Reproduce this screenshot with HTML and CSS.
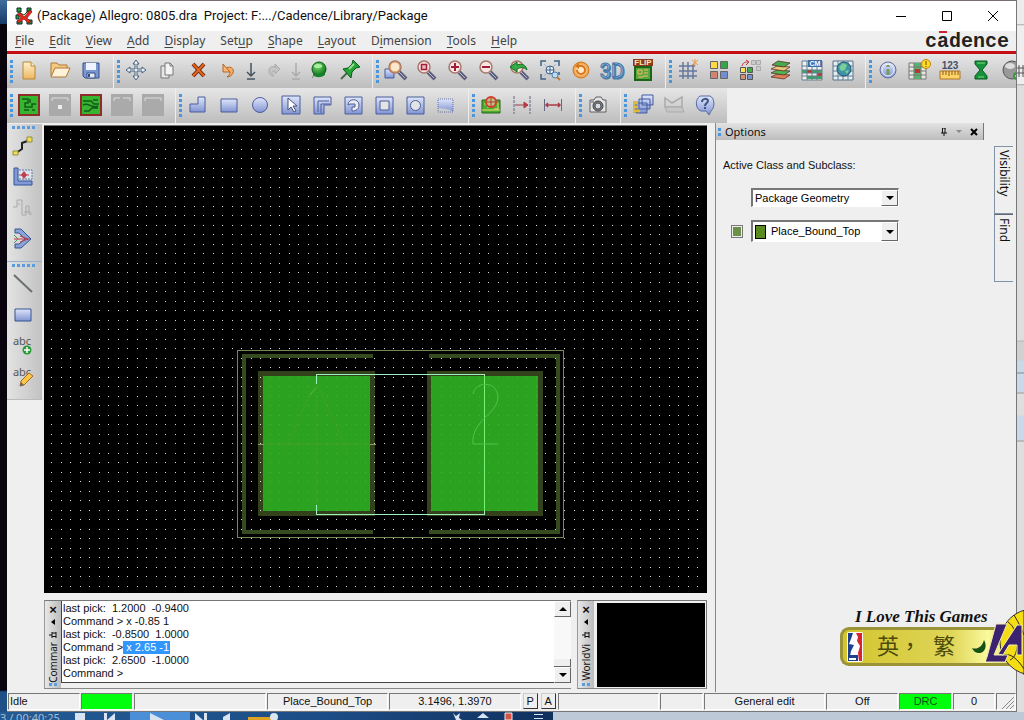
FILE: index.html
```html
<!DOCTYPE html>
<html lang="en">
<head>
<meta charset="utf-8">
<title>(Package) Allegro: 0805.dra</title>
<link rel="stylesheet" href="styles.css">
</head>
<body>
<svg class="defs" width="0" height="0" aria-hidden="true">
  <defs>
    <linearGradient id="blue" x1="0" y1="0" x2="0" y2="1"><stop offset="0" stop-color="#dfe6fa"/><stop offset="1" stop-color="#8194d2"/></linearGradient>
    <linearGradient id="paper" x1="0" y1="0" x2="0" y2="1"><stop offset="0" stop-color="#fff0cf"/><stop offset="1" stop-color="#edb65f"/></linearGradient>
    <radialGradient id="green" cx=".4" cy=".3" r=".7"><stop offset="0" stop-color="#7fdc6c"/><stop offset="1" stop-color="#08701c"/></radialGradient>
    <radialGradient id="orange" cx=".5" cy=".5" r=".5"><stop offset=".3" stop-color="#ffe9c9"/><stop offset="1" stop-color="#ec9337"/></radialGradient>
    <symbol id="lens" viewBox="0 0 24 24"><path d="M14 14l7 7" stroke="#5d5d7c" stroke-width="4"/><path d="M14 14l6 6" stroke="#b9bad2" stroke-width="1"/><circle cx="10" cy="9" r="6" fill="#f6e5e1" stroke="#a7776b" stroke-width="1.5"/></symbol>
    <symbol id="board" viewBox="0 0 24 24"><rect x="2" y="2" width="20" height="20" fill="#36b531" stroke="#8e2b2b" stroke-width="2"/></symbol>
    <symbol id="pinmark" viewBox="0 0 8 8"><path d="M2 0h4M2.500 0v5M5 0v5M1 5h6M4 5v3" fill="none" stroke="#111"/></symbol>
  </defs>
</svg>
<div class="desktop">
  <div class="edge edge-left"></div>
  <main class="window">
    <header class="titlebar">
      <svg class="app-icon" viewBox="0 0 18 18"><path d="M2 1h4v4H2zM12 1h4v4h-4zM1 8h3v4H1zM2 14h5v3H2zM12 13h5v4h-5z" fill="#1faa3a" stroke="#123"/><path d="M3 5l6 3 6-6M4 15l4-5 7 5" stroke="#134a1c" fill="none"/><path d="M2 7l4-1 3 4 6-7 2 2-5 6 4 4-3 1-4-4-5 4-2-2 4-3z" fill="#e02a20" stroke="#7c1010" stroke-width=".6"/></svg>
      <h1>(Package) Allegro: 0805.dra&nbsp; Project: F:.../Cadence/Library/Package</h1>
      <div class="caption">
        <button aria-label="Minimize"><svg viewBox="0 0 12 12"><path d="M1 6.500h10" stroke="#000"/></svg></button>
        <button aria-label="Maximize"><svg viewBox="0 0 12 12"><path d="M1.500 1.500h9v9h-9z" fill="none" stroke="#000"/></svg></button>
        <button aria-label="Close"><svg viewBox="0 0 12 12"><path d="M1 1l10 10M11 1L1 11" stroke="#000"/></svg></button>
      </div>
    </header>
    <nav class="menubar">
      <button><u>F</u>ile</button><button><u>E</u>dit</button><button><u>V</u>iew</button><button><u>A</u>dd</button><button><u>D</u>isplay</button><button>Set<u>u</u>p</button><button><u>S</u>hape</button><button><u>L</u>ayout</button><button>D<u>i</u>mension</button><button><u>T</u>ools</button><button><u>H</u>elp</button>
      <span class="brand">c<span class="macron">a</span>dence</span>
    </nav>

    <div class="toolrow first">
      <div class="group"><i class="grip"></i>
        <button aria-label="New"><svg viewBox="0 0 24 24"><path d="M6 4h8l4 4v13H6z" fill="url(#paper)" stroke="#b98638"/><path d="M14 4v4h4" fill="#fff3d8" stroke="#b98638"/></svg></button>
        <button aria-label="Open"><svg viewBox="0 0 24 24"><path d="M3 18V5h6l2 2h8v4" fill="#f5c982" stroke="#b07836"/><path d="M3 19l4-9h15l-4 9z" fill="#fff2d8" stroke="#b07836"/></svg></button>
        <button aria-label="Save"><svg viewBox="0 0 24 24"><path d="M4 5h16v15H6l-2-2z" fill="#7c96cf" stroke="#34508a"/><path d="M7 5h10v7H7z" fill="#eef3ff"/><path d="M8 15h8v5H8z" fill="#e6e8ee" stroke="#34508a"/><path d="M10 16v3" stroke="#34508a" stroke-width="2"/></svg></button>
      </div>
      <div class="group"><i class="grip"></i>
        <button aria-label="Move"><svg viewBox="0 0 24 24"><path d="M12 2l3 4h-2v5h5V9l4 3-4 3v-2h-5v5h2l-3 4-3-4h2v-5H6v2l-4-3 4-3v2h5V6H9z" fill="#e8eef6" stroke="#49627f"/></svg></button>
        <button aria-label="Copy"><svg viewBox="0 0 24 24"><path d="M6 8h8v12H6z" fill="#e6e6e6" stroke="#777"/><path d="M10 5h5l3 3v9h-8z" fill="#f4f4f4" stroke="#777"/><path d="M15 5v3h3" fill="none" stroke="#777"/></svg></button>
        <button aria-label="Delete"><svg viewBox="0 0 24 24"><path d="M7 6l11 12M18 6L7 18" stroke="#742408" stroke-width="4"/><path d="M7 6l11 12M18 6L7 18" stroke="#e2671f" stroke-width="2"/></svg></button>
        <button aria-label="Undo"><svg viewBox="0 0 24 24"><path d="M8 11c4-4 10-1 8 4-1 2-3 4-6 4 4-3 4-6 0-6z" fill="#f3ad68" stroke="#b96522"/><path d="M6 6v8h7z" fill="#f6b777" stroke="#b96522"/></svg></button>
        <button class="slim" aria-label="Undo list"><svg viewBox="0 0 24 24"><path d="M12 5v13M8 14l4 4 4-4M8 21h8" fill="none" stroke="#43525e" stroke-width="1.500"/></svg></button>
        <button aria-label="Redo"><svg viewBox="0 0 24 24"><path d="M15 10c-4-3-9-1-8 4 0 2 2 4 5 4-3-2-3-5 1-5v3l5-5-5-5v3" fill="#c4c4c4" stroke="#aaa"/></svg></button>
        <button class="slim" aria-label="Redo list"><svg viewBox="0 0 24 24"><path d="M12 5v13M8 14l4 4 4-4M8 21h8" fill="none" stroke="#aaa" stroke-width="1.500"/></svg></button>
        <button aria-label="Locate"><svg viewBox="0 0 24 24"><path d="M8 16l-3 4" stroke="#777"/><circle cx="12" cy="11" r="7" fill="url(#green)" stroke="#0a5a16"/><path d="M6 15c3 3 9 3 12-1v3c-4 3-9 3-12 0z" fill="#19842a"/><ellipse cx="11" cy="8" rx="4" ry="2" fill="#a9efa0"/></svg></button>
        <button aria-label="Pin"><svg viewBox="0 0 24 24"><path d="M9 15l-6 6" stroke="#4b6b4b" stroke-width="2"/><path d="M5 11l5-1 4-4 1-4 7 7-4 1-4 4-1 6z" fill="#26a336" stroke="#0b5a17"/><path d="M11 11l5-5" stroke="#8fe38c" stroke-width="2"/></svg></button>
      </div>
      <div class="group"><i class="grip"></i>
        <button aria-label="Zoom points"><svg viewBox="0 0 24 24"><path d="M2 11h9v9H2z" fill="url(#blue)" stroke="#445a9d"/><use href="#lens" x="2"/><circle cx="12" cy="9" r="5" fill="#fbe7cd" stroke="#d88a3c"/></svg></button>
        <button aria-label="Zoom fit"><svg viewBox="0 0 24 24"><use href="#lens"/><path d="M7.500 6.500h5v5h-5z" fill="#efb7bd" stroke="#a01d3b" stroke-width="1.500"/></svg></button>
        <button aria-label="Zoom in"><svg viewBox="0 0 24 24"><use href="#lens"/><path d="M10 5v8M6 9h8" stroke="#a01d3b" stroke-width="2"/></svg></button>
        <button aria-label="Zoom out"><svg viewBox="0 0 24 24"><use href="#lens"/><path d="M6 9h8" stroke="#a01d3b" stroke-width="2"/></svg></button>
        <button aria-label="Zoom previous"><svg viewBox="0 0 24 24"><use href="#lens"/><path d="M3 9l7-5v3c5-2 9 0 10 5-3-3-6-3-10-1v3z" fill="#35ac45" stroke="#0d6a20"/></svg></button>
        <button aria-label="Zoom center"><svg viewBox="0 0 24 24"><path d="M3 8V3h5M16 3h5v5M3 16v5h5M21 14v3" fill="none" stroke="#3f6189" stroke-width="1.500"/><path d="M6 6l12 12M18 6L6 18" stroke="#9db5cf"/><circle cx="12" cy="12" r="4" fill="#e9f0f7" stroke="#3f6189"/><path d="M12 8v8M8 12h8" stroke="#3f6189"/><circle cx="17" cy="17" r="3" fill="#b9dcf4" stroke="#4f81ae"/><path d="M19 19l3 3" stroke="#c27a35" stroke-width="2"/></svg></button>
        <button aria-label="Redraw"><svg viewBox="0 0 24 24"><circle cx="12" cy="12" r="8" fill="url(#orange)" stroke="#d27a1e"/><path d="M8 12a4 4 0 1 0 4-4H9" fill="none" stroke="#d8781c" stroke-width="2"/><path d="M10 5v6l-4-3z" fill="#d8781c"/></svg></button>
        <button aria-label="3D view"><svg viewBox="0 0 24 24"><text x="13" y="21" class="t3d shade">3D</text><text x="12" y="20" class="t3d">3D</text></svg></button>
        <button aria-label="Flip design"><svg viewBox="0 0 24 24"><path d="M2 1h20v7H2z" fill="#8c3b1c"/><text x="12" y="7" class="tflip">FLIP</text><path d="M4 9h16v13H4z" fill="#58a83d" stroke="#1b6418" stroke-width="2"/><path d="M7 12h4v4H7zM13 12h4M13 15h4M7 19h4l2-1h4" fill="none" stroke="#f4b86c"/></svg></button>
      </div>
      <div class="group"><i class="grip"></i>
        <button aria-label="Grid"><svg viewBox="0 0 24 24"><path d="M7 4v17M12 4v17M17 6v15M3 8h16M3 13h18M3 18h18" stroke="#65789f" stroke-width="1.500"/><path d="M19 1v7M16 2l6 5M22 2l-6 5" stroke="#ed9b45"/></svg></button>
        <button aria-label="Colors"><svg viewBox="0 0 24 24"><g stroke="#666"><path d="M3.500 3.500h7v7h-7z" fill="#ffd83f"/><path d="M13.500 3.500h7v7h-7z" fill="#38a545"/><path d="M3.500 13.500h7v7h-7z" fill="#cf8570"/><path d="M13.500 13.500h7v7h-7z" fill="#718ed0"/></g></svg></button>
        <button aria-label="Shadow"><svg viewBox="0 0 24 24"><g stroke="#aaa" fill="#ccc"><path d="M13.500 2.500h4v4h-4zM18.500 2.500h4v4h-4zM18.500 8.500h4v4h-4z"/></g><g stroke="#555"><path d="M2.500 9.500h5v5h-5z" fill="#ffe15a"/><path d="M9.500 9.500h5v5h-5z" fill="#42ab49"/><path d="M2.500 16.500h5v5h-5z" fill="#dc8b77"/><path d="M9.500 16.500h5v5h-5z" fill="#7591ce"/></g><path d="M4 8c1-4 4-4 6-4M8 2l3 2-3 3" stroke="#c33232" fill="none"/></svg></button>
        <button aria-label="Cross section"><svg viewBox="0 0 24 24"><g stroke="#573523" stroke-width=".8"><path d="M2 19l6-3 13 1-6 4z" fill="#e37c58"/><path d="M2 15l6-3 13 1-6 4z" fill="#50b355"/><path d="M2 11l6-3 13 1-6 4z" fill="#e9c57b"/><path d="M3 7l6-4 12 2-6 4z" fill="#48a94e"/></g></svg></button>
        <button aria-label="Constraints"><svg viewBox="0 0 24 24"><path d="M2 3h20v19H2z" fill="#eee" stroke="#667d8c"/><path d="M2 12h20v3H2zM7 18h15v3H7z" fill="#38a566"/><path d="M7 12h5v3H7zM17 15h5v3h-5z" fill="#c42c2c"/><path d="M2 8h20M2 12h20M2 15h20M2 18h20M7 3v19M12 8v14M17 8v14" stroke="#667d8c"/><path d="M8 2h14v7H8z" fill="#3c6fae"/><text x="15" y="8" class="tcm">CM</text></svg></button>
        <button aria-label="Constraint map"><svg viewBox="0 0 24 24"><path d="M2 3h20v19H2z" fill="#e5edf0" stroke="#55738b"/><path d="M2 8h20M2 13h20M2 18h20M7 3v19M12 3v19M17 3v19" stroke="#607e98"/><circle cx="13" cy="11" r="7" fill="#3d94a5" stroke="#224e70"/><path d="M8 9l4-4 4 2-2 5-4 1zM14 13l4-1-2 4z" fill="#78cf97"/></svg></button>
      </div>
      <div class="group"><i class="grip"></i>
        <button aria-label="Information"><svg viewBox="0 0 24 24"><circle cx="12" cy="12" r="8" fill="url(#blue)" stroke="#65709d"/><circle cx="12" cy="12" r="6" fill="none" stroke="#f0f3ff"/><path d="M12 11v6M12 7v2" stroke="#759e59" stroke-width="3"/></svg></button>
        <button aria-label="Reports"><svg viewBox="0 0 24 24"><path d="M2 5h17v16H2z" fill="#e7e7df" stroke="#777"/><path d="M7 5h7v16H7z" fill="#5ab36c"/><path d="M2 9h17M2 13h17M2 17h17M7 5v16M14 5v16" stroke="#777"/><path d="M8 11h5v4H8z" fill="#b33"/><circle cx="19" cy="6" r="4.500" fill="#ffda28" stroke="#bd8410"/><path d="M19 3v4M19 8v1" stroke="#6c4b00"/></svg></button>
        <button aria-label="Measure"><svg viewBox="0 0 24 24"><text x="12" y="11" class="t123">123</text><path d="M2 13h20v8H2z" fill="#ffd466" stroke="#af7428"/><path d="M5 13v4M8 13v4M11 13v5M14 13v4M17 13v4M20 13v4" stroke="#85591e"/></svg></button>
        <button aria-label="Waive"><svg viewBox="0 0 24 24"><path d="M6 3h12v3l-5 6 5 6v3H6v-3l5-6-5-6z" fill="#16923c" stroke="#07591f"/><path d="M8 5h8M9 19h6" stroke="#83d783"/></svg></button>
        <button aria-label="Status"><svg viewBox="0 0 24 24"><circle cx="12" cy="12" r="9" fill="#999" stroke="#555"/><ellipse cx="10" cy="8" rx="5" ry="3" fill="#ddd"/><circle cx="17" cy="18" r="4" fill="#389b44"/><path d="M15 18h4M17 16v4" stroke="#fff"/></svg></button>
      </div>
    </div>

    <div class="toolrow second">
      <div class="group"><i class="grip"></i>
        <button aria-label="General edit"><svg viewBox="0 0 24 24"><use href="#board"/><path d="M5 6h6v4H8v4h7v-3h4M7 17h5M15 17h3M13 6v4" fill="none" stroke="#145b1a" stroke-width="1.500"/></svg></button>
        <button class="off" aria-label="Placement edit"><svg viewBox="0 0 24 24"><path d="M1 1h22v22H1z" fill="#aaa"/><path d="M4 8V5h16v3" fill="none" stroke="#ddd"/><path d="M10 16v-4h4v4" fill="#eee"/></svg></button>
        <button aria-label="Etch edit"><svg viewBox="0 0 24 24"><use href="#board"/><path d="M4 8h8l3 3h5M4 12c6-3 8 4 15 1M5 18h5l3-3h6M14 7h5" fill="none" stroke="#145b1a" stroke-width="1.500"/></svg></button>
        <button class="off" aria-label="Signal integrity"><svg viewBox="0 0 24 24"><path d="M1 1h22v22H1z" fill="#aaa"/><path d="M4 8V5h6M13 5h7v3" fill="none" stroke="#ddd"/></svg></button>
        <button class="off" aria-label="IR drop"><svg viewBox="0 0 24 24"><path d="M1 1h22v22H1z" fill="#aaa"/><path d="M4 8V5h16v3" fill="none" stroke="#ddd"/></svg></button>
      </div>
      <div class="group"><i class="grip"></i>
        <button aria-label="Shape polygon"><svg viewBox="0 0 24 24"><path d="M12 4h7v15H4v-8h8z" fill="url(#blue)" stroke="#4c5d9b"/></svg></button>
        <button aria-label="Shape rectangle"><svg viewBox="0 0 24 24"><path d="M4 6h16v13H4z" fill="url(#blue)" stroke="#4c5d9b"/></svg></button>
        <button aria-label="Shape circle"><svg viewBox="0 0 24 24"><circle cx="12" cy="12" r="7.500" fill="url(#blue)" stroke="#4c5d9b"/></svg></button>
        <button aria-label="Shape select"><svg viewBox="0 0 24 24"><path d="M3 3h18v18H3z" fill="url(#blue)" stroke="#4c5d9b"/><path d="M9 5v12l3-3 3 5 2-1-3-5h4z" fill="#fff" stroke="#465078"/></svg></button>
        <button aria-label="Void shape"><svg viewBox="0 0 24 24"><path d="M4 4h17v8h-7v9H4z" fill="url(#blue)" stroke="#4c5d9b"/><path d="M8 19V8h11M11 20v-9h9" fill="none" stroke="#4c5d9b"/></svg></button>
        <button aria-label="Void polygon"><svg viewBox="0 0 24 24"><path d="M4 4h17v17H4z" fill="url(#blue)" stroke="#4c5d9b"/><path d="M7 12c0-7 11-7 11 0 0 4-3 6-7 6v-4h3v-3h-5z" fill="#eee" stroke="#4c5d9b"/></svg></button>
        <button aria-label="Void rectangle"><svg viewBox="0 0 24 24"><path d="M4 4h17v17H4z" fill="url(#blue)" stroke="#4c5d9b"/><path d="M8 8h9v9H8z" fill="#e4e4e4" stroke="#4c5d9b"/></svg></button>
        <button aria-label="Void circle"><svg viewBox="0 0 24 24"><path d="M4 4h17v17H4z" fill="url(#blue)" stroke="#4c5d9b"/><circle cx="12.500" cy="12.500" r="5" fill="#e4e4e4" stroke="#4c5d9b"/></svg></button>
        <button aria-label="Island delete"><svg viewBox="0 0 24 24"><path d="M4 6h15v13l-3-2-4-1-8-1z" fill="url(#blue)"/><path d="M4 6h15v13H4z" fill="none" stroke="#66739f" stroke-dasharray="1 1"/></svg></button>
      </div>
      <div class="group"><i class="grip"></i>
        <button aria-label="Drill legend"><svg viewBox="0 0 24 24"><path d="M3 7h18v13H3z" fill="#49ad32" stroke="#23661a"/><path d="M3 17h18M5 11h4v4M19 10v6h-4" fill="none" stroke="#f1dc6b"/><circle cx="12" cy="9" r="5" fill="#b7c48b" stroke="#d33e2c" stroke-width="2"/><path d="M12 5v8M8 9h8" stroke="#c53324"/></svg></button>
        <button aria-label="Linear dimension"><svg viewBox="0 0 24 24"><path d="M4 3v18M20 3v18" stroke="#636788" stroke-dasharray="3 1"/><path d="M5 12h12M14 9l4 3-4 3z" fill="#c43a41" stroke="#a93b46"/></svg></button>
        <button aria-label="Datum dimension"><svg viewBox="0 0 24 24"><path d="M3.500 6v12M20.500 6v12" stroke="#636788"/><path d="M5 12h14M7 10l-2 2 2 2M17 10l2 2-2 2" fill="none" stroke="#a93b46" stroke-width="1.500"/></svg></button>
      </div>
      <div class="group"><i class="grip"></i>
        <button aria-label="Snapshot"><svg viewBox="0 0 24 24"><path d="M4 7h4l2-3h5l2 3h3v12H4z" fill="#e4e4e4" stroke="#5e5e65"/><circle cx="12" cy="13" r="5" fill="#777b83" stroke="#444"/><circle cx="12" cy="13" r="3" fill="#d4dae3" stroke="#555"/><path d="M5 9h3" stroke="#555"/></svg></button>
      </div>
      <div class="group"><i class="grip"></i>
        <button aria-label="Window layers"><svg viewBox="0 0 24 24"><g fill="url(#blue)" stroke="#435aa1"><path d="M11 2h11v10H11zM8 6h11v10H8zM5 10h11v10H5z"/></g><path d="M2 10h5M2 14h5M2 18h7" stroke="#ba941b" stroke-width="3"/><path d="M2 10h5M2 14h5M2 18h7" stroke="#ffe35a"/></svg></button>
        <button aria-label="Mail"><svg viewBox="0 0 24 24"><path d="M3 5l7 5 10-6v10H3z" fill="none" stroke="#aaa" stroke-width="1.500"/><path d="M3 14h17l2 5H5z" fill="#c5c5c5" stroke="#aaa"/></svg></button>
        <button aria-label="Help"><svg viewBox="0 0 24 24"><path d="M7 3h10c5 2 5 12 1 15l-2 4-3-4H8C2 16 2 6 7 3z" fill="url(#blue)" stroke="#596b9f"/><path d="M9 9c0-4 6-4 6-1 0 2-3 2-3 5M12 14v2" fill="none" stroke="#3c5382" stroke-width="2"/></svg></button>
      </div>
    </div>

    <div class="workspace">
      <aside class="rail">
        <div class="vgroup"><i class="grip"></i>
          <button aria-label="Add connect"><svg viewBox="0 0 24 24"><path d="M5 19l6-4V9l8-3" fill="none" stroke="#222" stroke-width="2"/><path d="M2 17h5v4H2zM16 3h5v5h-5z" fill="#f3dc58" stroke="#93903b"/></svg></button>
          <button aria-label="Slide"><svg viewBox="0 0 24 24"><path d="M3 3h4v13h14v4H3z" fill="#8199d4" stroke="#31549b"/><path d="M8 5h13v9H8" fill="#d9e2ef" stroke="#5a7cab" stroke-dasharray="2 1"/><path d="M8 10h10" stroke="#c13f49"/><path d="M13 6l3 4-3 4-3-4z" fill="#c13f49"/></svg></button>
          <button class="off" aria-label="Delay tune"><svg viewBox="0 0 24 24"><path d="M2 11h4V4h5v15h4v-9h3v8h3M7 8h2M13 16h7" fill="none" stroke="#aaa"/></svg></button>
          <button aria-label="Custom smooth"><svg viewBox="0 0 24 24"><path d="M4 2h6l10 10-10 9H4v-4h4l6-5-6-6H4z" fill="#89a2d8" stroke="#34558f"/><path d="M3 12h16M9 9l8 3-8 3" fill="none" stroke="#b93c4b"/><path d="M3 8l4 4-4 4" stroke="#3a9a55" fill="none"/></svg></button>
        </div>
        <div class="vgroup"><i class="grip"></i>
          <button aria-label="Add line"><svg viewBox="0 0 24 24"><path d="M3 3l18 17" stroke="#68716f" stroke-width="2"/></svg></button>
          <button aria-label="Add rectangle"><svg viewBox="0 0 24 24"><path d="M4 6h16v12H4z" fill="url(#blue)" stroke="#34558f"/></svg></button>
          <button aria-label="Add text"><svg viewBox="0 0 24 24"><text x="11" y="11" class="tabc">abc</text><circle cx="16" cy="16" r="4.500" fill="#2a9a3a"/><path d="M16 13v6M13 16h6" stroke="#fff" stroke-width="1.500"/></svg></button>
          <button aria-label="Edit text"><svg viewBox="0 0 24 24"><text x="11" y="11" class="tabc">abc</text><path d="M9 21l1-5 8-8 4 3-9 9z" fill="#ffc544" stroke="#a56a2a"/><path d="M9 21l1-4 3 3z" fill="#666"/></svg></button>
        </div>
      </aside>

      <section class="center">
        <svg class="canvas" role="img" aria-label="Package drawing">
          <defs>
            <pattern id="dots" width="19" height="19" patternUnits="userSpaceOnUse"><path d="M7 4h1v1H7zM17 4h1v1h-1zM7 13h1v1H7zM17 13h1v1h-1z" fill="#ddd" shape-rendering="crispEdges"/></pattern>
          </defs>
          <rect width="100%" height="100%" fill="#000"/>
          <g shape-rendering="crispEdges">
            <path d="M214 245h117v145H214zM383 245h116v145H383z" fill="#33421b"/>
            <path d="M219 250h107v135H219zM387 250h107v135H387z" fill="#2ba321"/>
            <path d="M329 230H200v176h129M385 230h129v176H385" fill="none" stroke="#354a1f" stroke-width="4"/>
          </g>
          <g fill="none" stroke="#3f9f24"><path d="M240 327l32-72 32 72M234 318h76M272 260v120M219 318h107"/></g>
          <path d="M266 269l6-7" stroke="#5ab93c" fill="none"/>
          <rect width="100%" height="100%" fill="url(#dots)" class="dots-low"/>
          <path d="M0 0H2000V2000H0zM219 250v135h107V250zM387 250v135h107V250z" fill="url(#dots)" fill-rule="evenodd"/>
          <g fill="none" shape-rendering="crispEdges">
            <path d="M193.500 224.500h326v187h-326z" stroke="#6f8c58"/>
            <path d="M214 318.500h6M326 318.500h6" stroke="#8c9a58"/>
            <path d="M272.500 258v-9.500h168v140h-168v-10" stroke="#9ff0c0"/>
            <path d="M440.500 250v135" stroke="#74f278"/>
          </g>
          <path d="M429 268c2-13 24-14 25 3 0 17-27 23-25 47h25" fill="none" stroke="#51c348"/>
        </svg>
        <div class="docks">
          <section class="dock console">
            <header class="strip"><button aria-label="Close">×</button><svg viewBox="0 0 8 8"><path d="M6 1v6L2 4z"/></svg><svg viewBox="0 0 8 8"><path d="M0 4h3M3 1v6M3 2h4M3 5.500h4M7 1v6" fill="none" stroke="#111"/></svg><span>Commar</span><i class="grip"></i></header>
            <div class="log">
              <p>last pick:&nbsp; 1.2000&nbsp; -0.9400</p>
              <p>Command &gt; x -0.85 1</p>
              <p>last pick:&nbsp; -0.8500&nbsp; 1.0000</p>
              <p>Command &gt;<mark> x 2.65 -1</mark></p>
              <p>last pick:&nbsp; 2.6500&nbsp; -1.0000</p>
              <p><label for="cmd">Command &gt;</label><input id="cmd" type="text"></p>
            </div>
            <div class="scroll"><button aria-label="Scroll up"><svg viewBox="0 0 8 8"><path d="M0 6h8L4 2z"/></svg></button><i></i><b></b><button aria-label="Scroll down"><svg viewBox="0 0 8 8"><path d="M0 2h8L4 6z"/></svg></button></div>
          </section>
          <section class="dock world">
            <header class="strip"><button aria-label="Close">×</button><svg viewBox="0 0 8 8"><path d="M6 1v6L2 4z"/></svg><svg viewBox="0 0 8 8"><path d="M0 4h3M3 1v6M3 2h4M3 5.500h4M7 1v6" fill="none" stroke="#111"/></svg><span>WorldVi</span><i class="grip"></i></header>
            <div class="overview"></div>
          </section>
        </div>
      </section>

      <aside class="options">
        <div class="options-main">
          <header><i class="grip"></i><h2>Options</h2><button aria-label="Pin panel"><svg viewBox="0 0 8 8"><use href="#pinmark"/></svg></button><button aria-label="Panel menu"><svg viewBox="0 0 8 8"><path d="M1 2h6L4 5z" fill="#888"/></svg></button><button aria-label="Close panel"><svg viewBox="0 0 8 8"><path d="M1 1l6 6M7 1L1 7" stroke="#000" stroke-width="2"/></svg></button></header>
          <form>
            <label for="cls">Active Class and Subclass:</label>
            <div class="combo"><select id="cls"><option>Package Geometry</option></select><b><svg viewBox="0 0 8 8"><path d="M0 2h8L4 6z"/></svg></b></div>
            <div class="subclass">
              <button type="button" class="visible" aria-label="Subclass visible"></button>
              <div class="combo tall"><i class="swatch"></i><select aria-label="Subclass"><option>Place_Bound_Top</option></select><b><svg viewBox="0 0 8 8"><path d="M0 2h8L4 6z"/></svg></b></div>
            </div>
          </form>
        </div>
        <div class="tabs"><button>Visibility</button><button>Find</button></div>
      </aside>
    </div>

    <footer class="status">
      <span class="s73 start">Idle</span><span class="s53 lit"></span><span class="s133"></span><span class="s123">Place_Bound_Top</span><span class="s133">3.1496, 1.3970</span><button>P</button><button>A</button><span class="s103"></span><span class="s43"></span><span class="s123">General edit</span><span class="s73">Off</span><span class="s53 lit">DRC</span><span class="s43">0</span><span class="s20"><svg viewBox="0 0 16 16"><path d="M3 16L16 3M7 16l9-9M11 16l5-5" stroke="#888"/></svg></span>
    </footer>
  </main>
  <div class="edge edge-right"><svg viewBox="0 0 8 14"><path d="M0 4h8M0 9h8M2 1v12M6 1v12" stroke="#555"/></svg></div>

  <div class="player">
    <span>3 / 00:40:25</span>
    <svg class="controls" viewBox="0 0 560 8"><path d="M130 0h60v8h-60z" fill="#4a8fd8"/><g fill="#d8e4f2"><path d="M75 1h10v7H75zM104 1h3v7h-3zM115 1v7h-8zM150 1l14 7h-14zM195 1l8 7h-8zM204 1h3v7h-3zM223 5l7-4v7h-7z"/><path d="M453 1l3 3 4-3-1 5 3 2h-6zM483 1l6 5h-12zM530 2h2M534 2h9v1h-9zM534 6h9v1h-9z"/></g><path d="M248 5h24v3h-24z" fill="#e0a020"/><circle cx="274" cy="5" r="4" fill="#dce6f0"/><path d="M505 1h7v7h-7z" fill="#d65345" stroke="#eee"/></svg>
  </div>

  <div class="ime">
    <p>I Love This Games</p>
    <div class="ime-bar">
      <svg class="nba" viewBox="0 0 16 30"><rect width="16" height="30" rx="2" fill="#fff"/><path d="M1 1h5L4 7 2 12l5 1-3 6-1 5H1z" fill="#1e3f8e"/><path d="M9 1h6v28h-3l-1-8 2-7-3-5 1-4z" fill="#d8242f"/><path d="M1 23h10v6H1z" fill="#1e3f8e"/><path d="M2 27h7" stroke="#fff" stroke-width="2"/></svg>
      <span>英</span><span class="comma">，</span><span>繁</span>
      <svg class="moon" viewBox="0 0 16 14"><path d="M1 8c5 2 10-1 12-8 4 7 0 13-5 13-3 0-6-2-7-5z" fill="#155216"/></svg>
    </div>
    <svg class="lakers" viewBox="0 0 38 74"><circle cx="47" cy="37" r="33" fill="#f5dd14" stroke="#333"/><path d="M22 17c12 8 12 34 2 38M38 5v65M28 10c5 8 8 15 10 20M18 50c6-2 13 3 20 14" fill="none" stroke="#332a18"/><path d="M10 19h11L8 50h14l-3 7H-1l2-5z" fill="#3b2370" stroke="#eee8b0"/><path d="M12 49l19-29h5v30h-5V40h-8l-6 10z" fill="#3b2370" stroke="#f5edb0"/></svg>
  </div>
</div>
</body>
</html>
```
FILE: styles.css
```css
* { box-sizing: border-box; }
body { margin: 0; font: 11px/13px "Liberation Sans", sans-serif; color: #111; background: #c9d4e2; }
h1, h2, p { margin: 0; font-weight: normal; }
button { padding: 0; border: 0; background: none; color: inherit; font: inherit; }
svg { display: block; }
.defs { position: absolute; }
.desktop { position: relative; display: grid; grid-template: minmax(0, 1fr) 8px / 7px minmax(0, 1fr) 7px; height: 100vh; overflow: hidden; }
.edge-left { background: linear-gradient(#3e6d9e 0, #173a68 24px, #08030c 24px, #08030c calc(100% - 22px), #1f4f87 calc(100% - 20px)); }
.edge-right { padding-top: 64px; background: linear-gradient(#ececec 0, #ececec 24px, #aaa 24px, #eee 26px, #eee 84px, #aaa 84px, #dedede 86px, #dedede 340px, #b5b5b5 341px, #d0d0d0 342px, #d0d0d0 360px, #c8dae9 361px, #c8dae9 372px, #888 373px, #c8dae9 374px, #c8dae9 392px, #999 393px, #dedede 394px, #dedede 415px, #c8dae9 416px, #c8dae9 440px, #999 441px, #dedede 442px); }
.edge-right svg { width: 8px; height: 14px; }
.window { display: flex; flex-direction: column; min-width: 0; min-height: 0; overflow: hidden; background: #efefef; border-top: 1px solid #776f75; border-right: 1px solid #777; border-bottom: 1px solid #777; }
.player { grid-column: 1 / -1; display: flex; position: relative; overflow: hidden; background: linear-gradient(90deg, #235b94, #1c4c85 60%, #10305e) 0 0 / 553px 100% no-repeat #bdc9d6; color: #a9bdd2; }
.player span { position: absolute; left: 0; top: 0; white-space: nowrap; font: 11px/12px "Noto Sans", sans-serif; }
.controls { width: 560px; height: 8px; }

.titlebar { display: flex; align-items: center; flex: none; height: 30px; padding-left: 8px; background: #fff; }
.app-icon { width: 18px; height: 18px; margin-right: 4px; }
.titlebar h1 { font: 13px/20px Roboto, sans-serif; white-space: nowrap; }
.caption { display: flex; margin-left: auto; }
.caption button { display: grid; place-items: center; width: 46px; height: 28px; }
.caption svg { width: 12px; height: 12px; }
.menubar { display: flex; align-items: center; gap: 15px; flex: none; height: 23px; padding: 0 7px 0 8px; border-bottom: 3px solid #c50d14; font: 12px/18px "Noto Sans", sans-serif; color: #444; }
.menubar u { text-underline-offset: 2px; }
.brand { margin-left: auto; padding-top: 2px; font: bold 20px/20px "Liberation Mono", monospace; color: #222; }
.macron { position: relative; }
.macron::before { content: ""; position: absolute; left: 2px; top: 1px; width: 8px; height: 2px; background: #d32034; }

.toolrow { display: flex; flex: none; }
.first { height: 34px; background: linear-gradient(#e2e2e2, #bdbdbd); }
.second { height: 35px; }
.group { display: flex; align-items: center; flex: none; padding-right: 8px; background: linear-gradient(#e6e6e6, #bdbdbd); box-shadow: inset -1px 0 #eee; }
.group button { display: grid; place-items: center; width: 31px; height: 31px; }
.group svg, .vgroup svg { width: 24px; height: 24px; overflow: visible; }
.group svg { margin-top: -2px; }
.group button.slim { display: flex; align-items: center; justify-content: center; width: 14px; }
.group .slim svg { flex: none; }
.grip { display: block; flex: none; width: 6px; height: 23px; background: repeating-linear-gradient(#4b96dc 0 3px, transparent 3px 5px) 3px 0 / 3px 100% no-repeat; }
.t3d { font: 20px Roboto, sans-serif; text-anchor: middle; fill: #acc9e7; stroke: #467aa9; stroke-width: 1; }
.shade { fill: #5586b2; }
.tflip { font: bold 8px "Liberation Sans", sans-serif; text-anchor: middle; fill: #ffe3b0; }
.tcm { font: bold 7px "Liberation Sans", sans-serif; text-anchor: middle; fill: #fff; }
.t123 { font: bold 10px "Liberation Sans", sans-serif; text-anchor: middle; fill: #44506b; }
.tabc { font: 11px "Noto Sans", sans-serif; text-anchor: middle; fill: #555; }

.workspace { display: flex; flex: 1; min-height: 0; }
.rail { flex: none; width: 37px; padding-top: 1px; }
.vgroup { width: 35px; padding-bottom: 7px; background: linear-gradient(90deg, #e3e3e3, #c2c2c2); border-bottom: 1px solid #98b0cc; }
.vgroup + .vgroup { border-color: #bbb; }
.vgroup button { display: grid; place-items: center; width: 32px; height: 31px; }
.vgroup .grip { width: 34px; height: 6px; background: repeating-linear-gradient(90deg, #5b9cde 0 3px, transparent 3px 5px) 5px 2px / 23px 3px no-repeat; }
.center { display: flex; flex: 1; flex-direction: column; min-width: 0; padding-right: 8px; }
.canvas { flex: 1; width: 100%; min-height: 0; margin-top: 2px; border-top: 1px solid #777; background: #000; }
.dots-low { opacity: .2; }
.docks { display: flex; flex: none; gap: 3px; height: 99px; padding: 7px 0 3px; }
.dock { display: flex; min-width: 0; border-top: 1px solid #777; border-bottom: 1px solid #888; border-left: 1px solid #999; }
.console { flex: 1; margin-right: 3px; }
.strip { display: flex; flex-direction: column; align-items: center; flex: none; width: 16px; padding-top: 2px; background: linear-gradient(90deg, #e8e8e8, #bcbcbc); }
.strip button { height: 13px; font: bold 13px/13px "Liberation Sans", sans-serif; }
.strip svg { width: 8px; height: 8px; margin: 2px 0 3px; flex: none; }
.strip span { flex: none; margin: auto 0; writing-mode: vertical-rl; transform: rotate(180deg); font: 10px/14px "Noto Sans", sans-serif; white-space: nowrap; }
.strip .grip { width: 8px; height: 3px; margin-bottom: 2px; background: repeating-linear-gradient(90deg, #5b9cde 0 3px, transparent 3px 5px); }
.log { flex: 1; min-width: 0; margin-bottom: 5px; padding: 1px; background: #fff; border-left: 1px solid #444; border-bottom: 1px solid #444; white-space: nowrap; overflow: hidden; }
.log p { display: flex; }
.log input { flex: 1; min-width: 0; height: 13px; padding: 0 3px; border: 0; outline: 0; font: inherit; }
mark { padding-right: 1px; background: #3297fd; color: #fff; white-space: pre; }
.scroll { display: flex; flex-direction: column; width: 17px; margin-bottom: 5px; background: #f8f8f8; }
.scroll i { flex: 1; }
.scroll > b { height: 8px; background: #efefef; border-right: 1px solid #666; border-bottom: 1px solid #666; }
.scroll button, .combo b { display: grid; place-items: center; width: 17px; height: 16px; background: #efefef; border: 1px solid; border-color: #fff #666 #666 #fff; }
.scroll svg, .combo svg { width: 8px; height: 8px; }
.world { width: 130px; border-right: 1px solid #777; }
.overview { flex: 1; margin: 2px 1px 1px 3px; background: #000; }

.options { display: flex; flex: none; width: 301px; border-left: 1px solid #888; }
.options-main { flex: 1; margin-right: 10px; }
.options header { display: flex; align-items: center; gap: 7px; height: 17px; padding-right: 5px; background: linear-gradient(#e2e2e2, #bdbdbd); border-right: 1px solid #777; }
.options header .grip { width: 3px; height: 8px; margin-left: 2px; background-position: 0 0; }
.options h2 { flex: 1; margin-left: -3px; font: 11px/15px "Noto Sans", sans-serif; }
.options header svg { width: 8px; height: 8px; }
.options form { display: flex; flex-direction: column; align-items: flex-start; padding: 19px 0 0 7px; }
.combo { display: flex; align-items: center; width: 148px; height: 19px; margin: 16px 0 0 28px; padding: 0 0 0 2px; background: #fff; border: 1px solid #fff; border-top: 2px solid #777; border-left: 2px solid #777; }
.combo select { flex: 1; min-width: 0; height: 16px; padding: 0; border: 0; outline: 0; appearance: none; background: #fff; color: #000; font: inherit; }
.combo b { flex: none; }
.subclass { display: flex; align-items: center; gap: 8px; margin: 13px 0 0 8px; }
.tall { height: 22px; margin: 0; }
.tall b { height: 19px; }
.swatch { width: 11px; height: 14px; margin-right: 5px; background: #5b8a1e; border: 1px solid #000; }
.visible { width: 12px; height: 13px; background: #6c8f49; border: 1px solid #777; box-shadow: inset 0 0 0 1px #eee; }
.tabs { display: flex; flex-direction: column; flex: none; width: 22px; margin-top: 23px; padding-right: 3px; }
.tabs button { height: 68px; padding-top: 3px; text-align: left; writing-mode: vertical-rl; font: 12px/16px "Noto Sans", sans-serif; border: 1px solid #8292a6; border-right: 0; }
.tabs button + button { border-top-color: #667; }

.status { display: flex; align-items: stretch; gap: 1px; flex: none; height: 19px; padding: 1px 0 1px 1px; }
.status span { display: flex; align-items: center; justify-content: center; min-width: 0; overflow: hidden; border: 1px solid; border-color: #777 #fff #fff #777; white-space: nowrap; }
.status .start { justify-content: flex-start; padding-left: 1px; }
.status .lit { background: #00ff0c; color: #174f17; }
.status button { flex: none; width: 15px; margin: 0 1px 1px 1px; border: 1px solid; border-color: #ccc #333 #333 #ccc; }
.s20 { flex: 20 1 20px; }
.s43 { flex: 43 1 43px; }
.s53 { flex: 53 1 53px; }
.s73 { flex: 73 1 73px; }
.s103 { flex: 103 1 103px; }
.s123 { flex: 123 1 123px; }
.s133 { flex: 133 1 133px; }
.s20 svg { width: 16px; height: 16px; }

.ime { position: absolute; right: 0; bottom: 43px; width: 184px; }
.ime p { padding-left: 15px; font: italic bold 17px/20px "Liberation Serif", serif; white-space: nowrap; }
.ime-bar { display: flex; align-items: center; height: 39px; margin-bottom: 11px; padding-left: 4px; border: 3px solid #9b9338; border-right: 0; border-radius: 9px 0 0 9px; background: linear-gradient(90deg, #d3c52f, #dfd558 60%, #fafa9d 80%, #ddd244); color: #4c4b0a; font: 22px/30px "Liberation Serif", "Noto Sans CJK TC", serif; }
.nba { width: 16px; height: 30px; margin-right: 14px; }
.comma { width: 34px; }
.moon { width: 16px; height: 14px; margin-left: 16px; }
.lakers { position: absolute; right: 0; top: -2px; width: 38px; height: 74px; }
```
